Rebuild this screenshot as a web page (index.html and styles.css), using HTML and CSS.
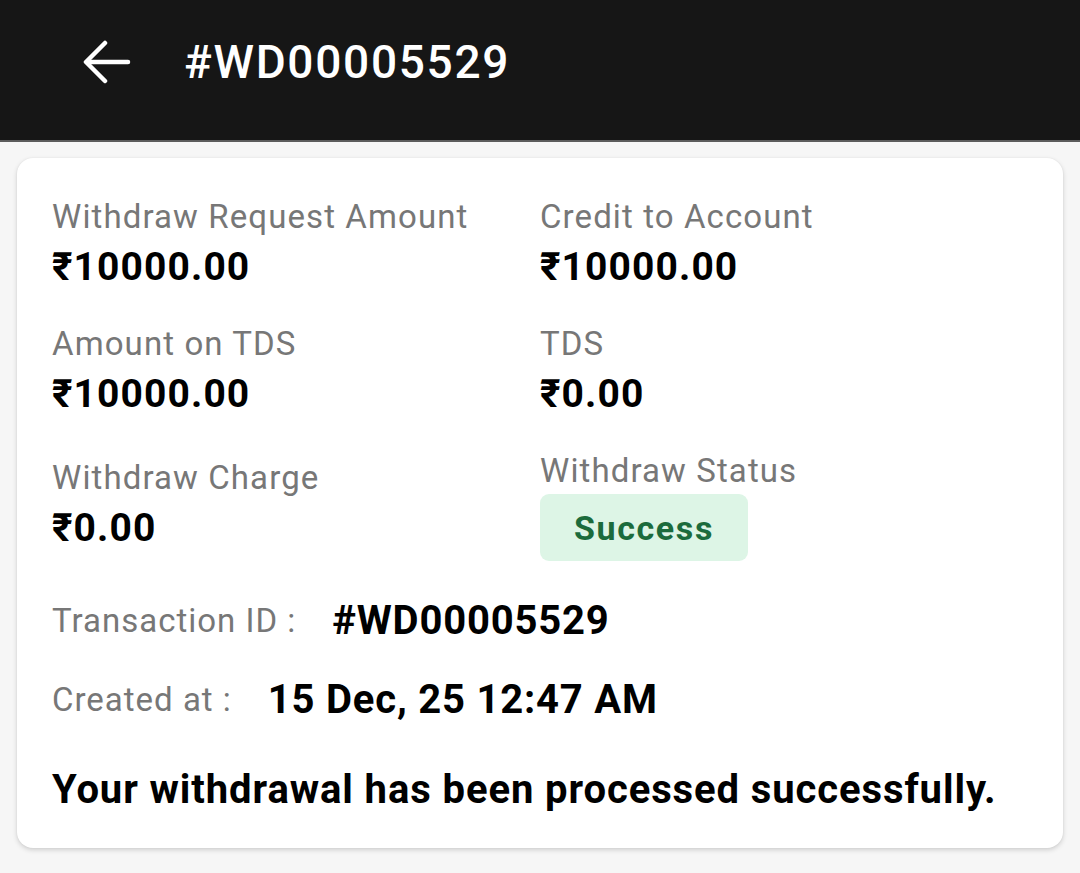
FILE: index.html
```html
<!DOCTYPE html>
<html lang="en">
<head>
<meta charset="utf-8">
<title>#WD00005529</title>
<link rel="stylesheet" href="styles.css">
</head>
<body>
<header class="topbar">
  <button class="back" aria-label="Back">
    <svg viewBox="0 0 48 46" width="48" height="46" fill="none" stroke="#fff" stroke-width="4.5" stroke-linecap="round" stroke-linejoin="round">
      <path d="M45 23H4"/>
      <path d="M22 4L3 23l19 19"/>
    </svg>
  </button>
  <h1 class="title">#WD00005529</h1>
</header>
<main class="page">
  <section class="card">
    <div class="grid">
      <div class="field">
        <div class="label">Withdraw Request Amount</div>
        <div class="value">₹10000.00</div>
      </div>
      <div class="field">
        <div class="label">Credit to Account</div>
        <div class="value">₹10000.00</div>
      </div>
      <div class="field">
        <div class="label">Amount on TDS</div>
        <div class="value">₹10000.00</div>
      </div>
      <div class="field">
        <div class="label">TDS</div>
        <div class="value">₹0.00</div>
      </div>
      <div class="field">
        <div class="label">Withdraw Charge</div>
        <div class="value">₹0.00</div>
      </div>
      <div class="field">
        <div class="label">Withdraw Status</div>
        <div class="badge">Success</div>
      </div>
    </div>
    <div class="info">
      <div class="info-row"><span class="info-label">Transaction ID :</span><span class="info-value">#WD00005529</span></div>
      <div class="info-row"><span class="info-label">Created at :</span><span class="info-value">15 Dec, 25 12:47 AM</span></div>
    </div>
    <p class="message">Your withdrawal has been processed successfully.</p>
  </section>
</main>
</body>
</html>
```

FILE: styles.css
```css
* { box-sizing: border-box; }
html, body { margin: 0; padding: 0; }
body {
  background: #f6f6f6;
  font-family: Roboto, "Liberation Sans", sans-serif;
  width: 1080px;
  height: 873px;
  overflow: hidden;
}
.topbar {
  height: 142px;
  background: #161616;
  border-bottom: 2px solid #5c5c5c;
  display: flex;
  align-items: center;
  padding-left: 83px;
  padding-bottom: 16px;
}
.back {
  background: none;
  border: 0;
  padding: 0;
  width: 48px;
  height: 46px;
  display: flex;
  margin-right: 53px;
}
.title {
  margin: 0;
  color: #fff;
  font-size: 46px;
  font-weight: 500;
  letter-spacing: 1.7px;
}
.page {
  padding: 16px 17px 0 17px;
}
.card {
  background: #fff;
  border-radius: 16px;
  box-shadow: 0 2px 5px rgba(0,0,0,0.16), 0 0 2px rgba(0,0,0,0.06);
  padding: 36px 35px 33px 35px;
}
.grid {
  display: grid;
  grid-template-columns: 488px 1fr;
  row-gap: 27px;
  align-items: center;
}
.label {
  color: #777;
  font-size: 33px;
  line-height: 46px;
  letter-spacing: 1.1px;
}
.value {
  color: #000;
  font-size: 39px;
  font-weight: 700;
  line-height: 54px;
  letter-spacing: 1.1px;
}
.badge {
  display: inline-flex;
  align-items: center;
  justify-content: center;
  width: 208px;
  height: 67px;
  background: #ddf5e6;
  border-radius: 9px;
  color: #1b6b3c;
  font-size: 34px;
  font-weight: 700;
  letter-spacing: 1.6px;
}
.info {
  margin-top: 35px;
  display: flex;
  flex-direction: column;
  gap: 29px;
}
.info-row {
  display: flex;
  align-items: center;
  line-height: 50px;
}
.info-label {
  color: #777;
  font-size: 33px;
  letter-spacing: 1px;
  margin-right: 36px;
}
.info-value {
  color: #000;
  font-size: 40px;
  font-weight: 700;
  letter-spacing: 0.8px;
}
.message {
  margin: 40px 0 0 0;
  font-size: 40px;
  line-height: 50px;
  font-weight: 700;
  color: #000;
  letter-spacing: 0.9px;
}
```
